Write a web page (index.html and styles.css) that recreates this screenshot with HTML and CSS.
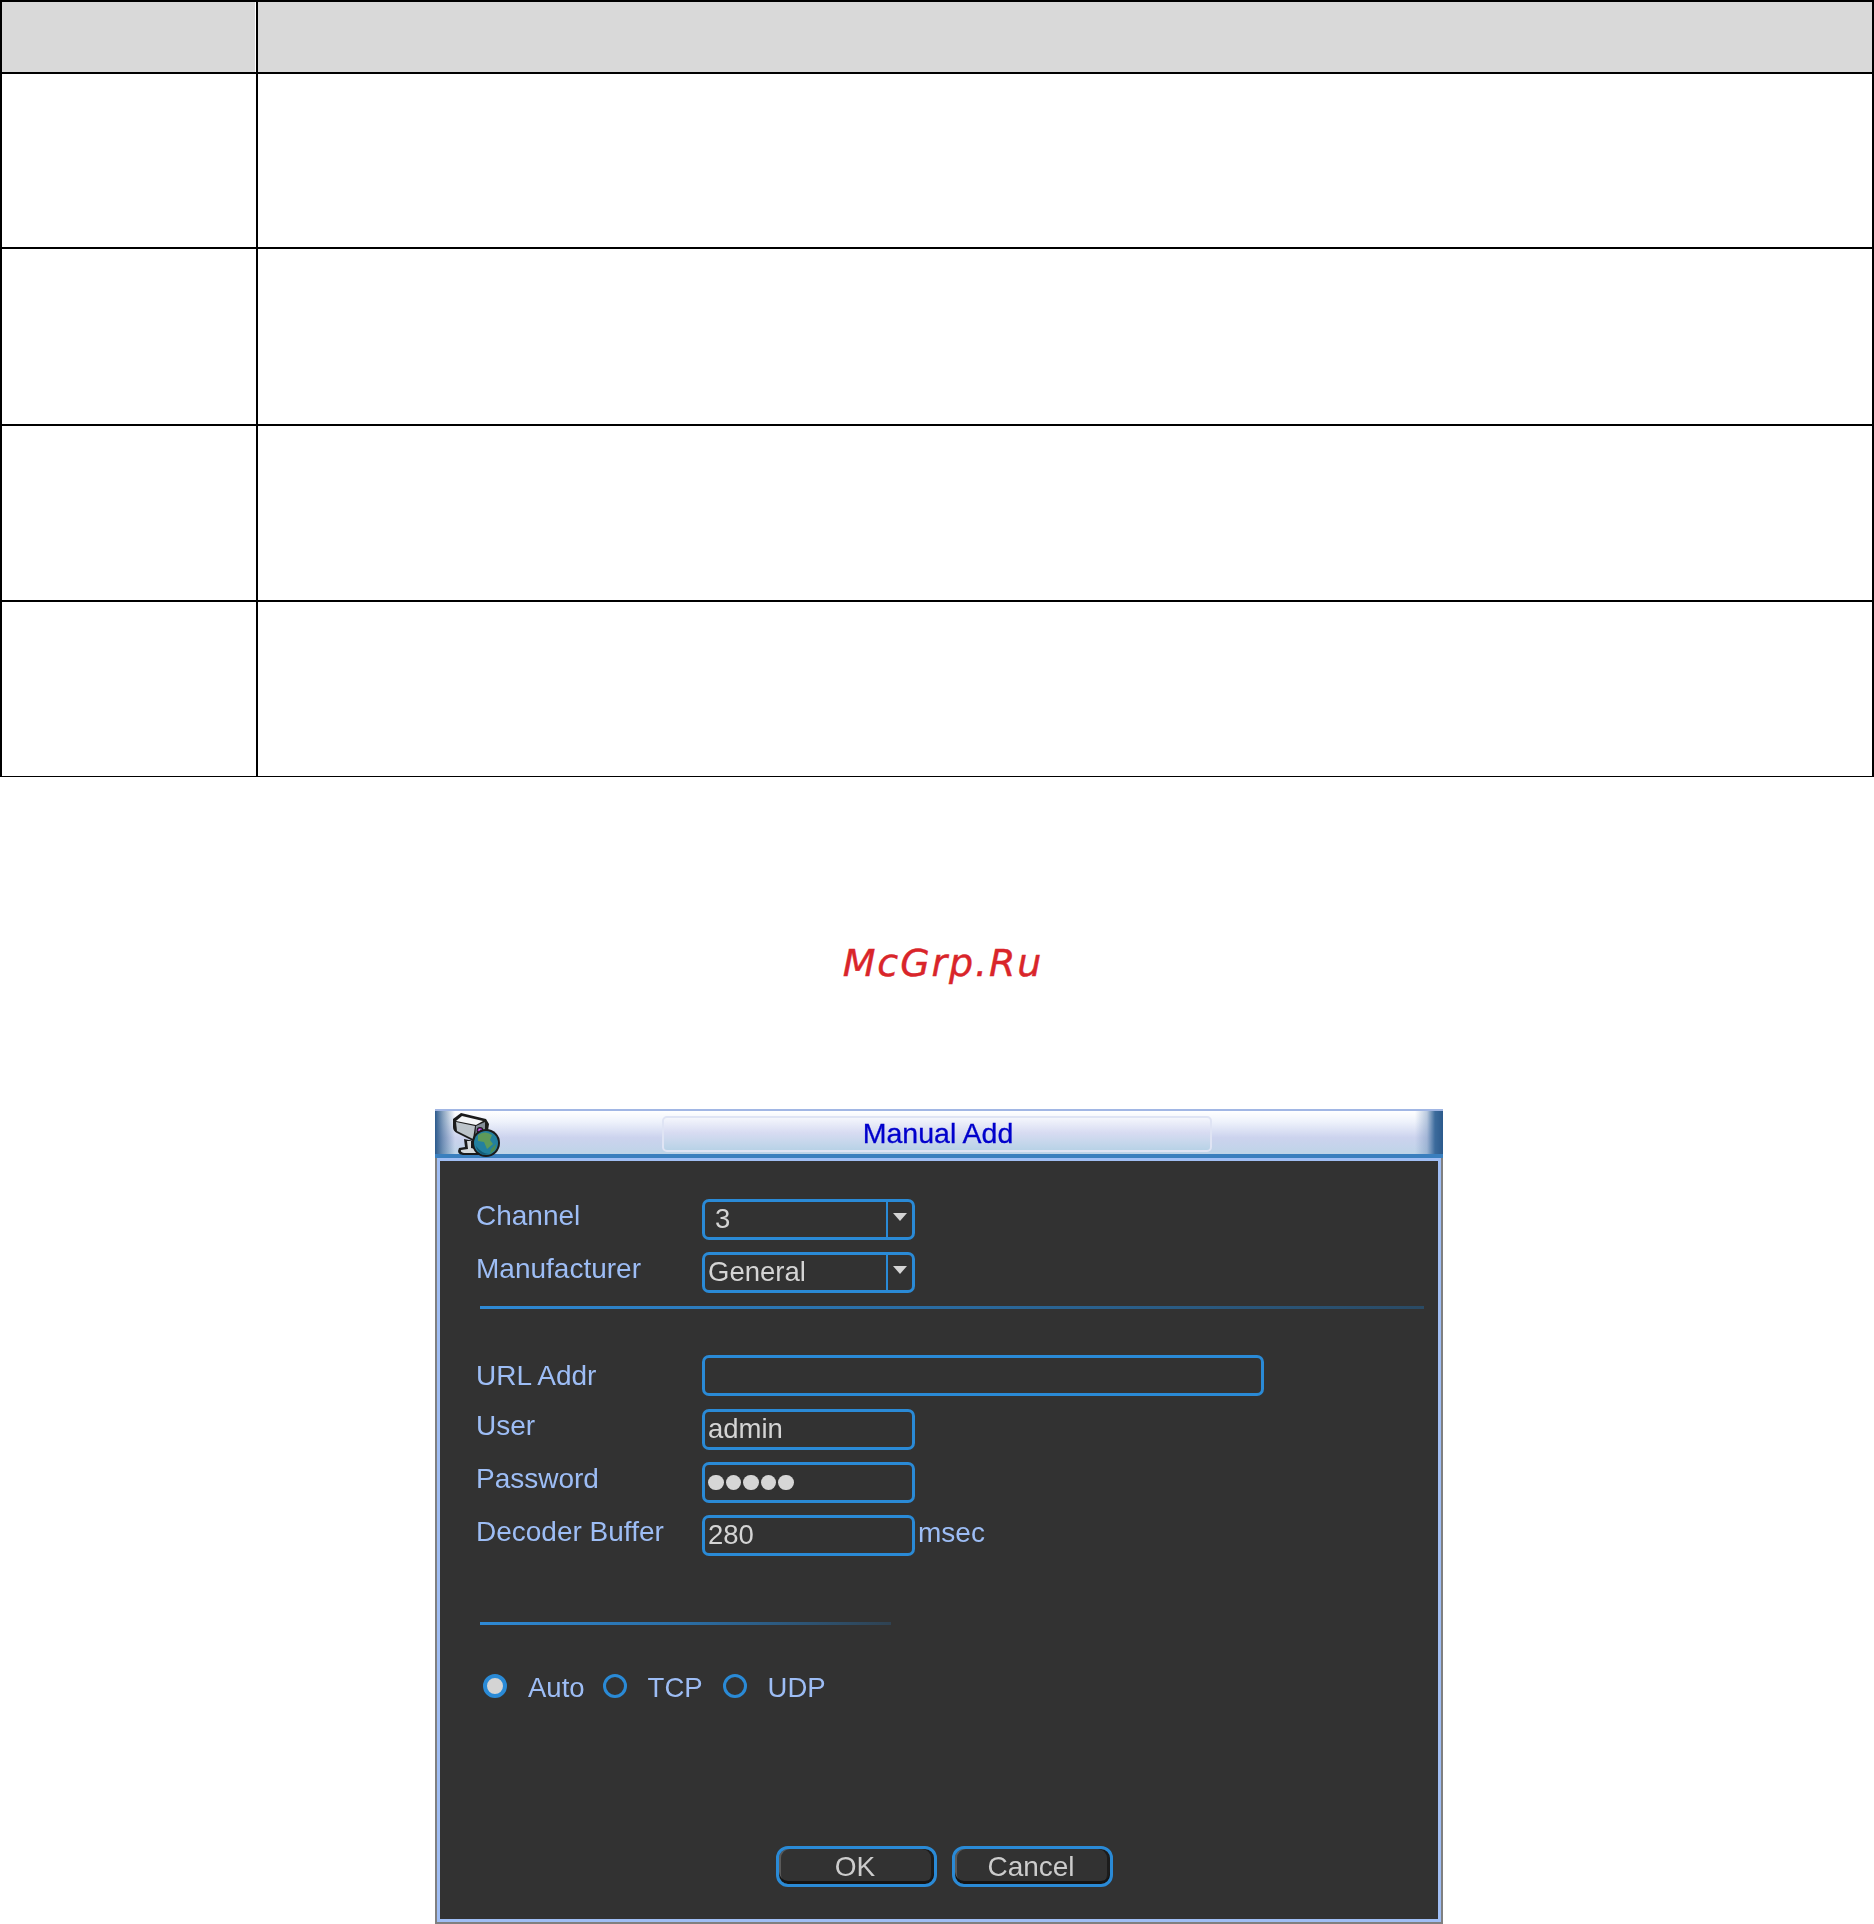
FILE: index.html
```html
<!DOCTYPE html>
<html lang="en">
<head>
<meta charset="utf-8">
<title>Manual Add</title>
<link rel="stylesheet" href="styles.css">
</head>
<body>
<table class="spec">
  <tr class="row-head"><th class="col-a"></th><th></th></tr>
  <tr class="row-1"><td></td><td></td></tr>
  <tr class="row-2"><td></td><td></td></tr>
  <tr class="row-3"><td></td><td></td></tr>
  <tr class="row-4"><td></td><td></td></tr>
</table>

<div class="watermark"><span class="watermark-text">McGrp.Ru</span></div>

<section class="dialog">
  <header class="titlebar">
    <svg class="cam-icon" width="50" height="46" viewBox="0 0 50 46" aria-hidden="true">
      <path d="M13 27 L14 35 L8 36 Q5 42 12 43 L30 43 L32 36 L23 34 L23 29 Z" fill="#1b1b1b"/>
      <path d="M16 29 L17 37 L10 38 Q9 40 13 41 L28 41 L28 38 L20 36 L20 29 Z" fill="#d6dadd"/>
      <path d="M2 7 L10 1 L35 7 L38 12 L36 25 L26 31 L6 21 Q2 19 2 15 Z" fill="#1b1b1b"/>
      <path d="M5 9 L11 4 L32 9 L25 13 Z" fill="#f4f6f8"/>
      <path d="M5 10 L24 14 L22 27 L6 19 Z" fill="#bcc4ca"/>
      <path d="M25 14 L34 10 L34 23 L24 28 Z" fill="#838d98"/>
      <circle cx="29" cy="18.500" r="3.400" fill="#1b1b1b"/>
      <circle cx="29" cy="18.500" r="2.300" fill="#a422c8"/>
      <circle cx="28.500" cy="18" r="0.800" fill="#f0c0ff"/>
      <circle cx="35" cy="31" r="14" fill="#1b1b1b"/>
      <circle cx="35" cy="31" r="12" fill="#23809f"/>
      <path d="M27 23 Q34 18 41 23 L39 28 L42 32 L36 37 L33 30 L27 29 Z" fill="#5d9a59"/>
      <path d="M40 37 L45 32 L44 38 L39 42 Z" fill="#4d8b52"/>
      <path d="M25 34 Q30 41 38 42 L32 43 Q26 40 25 34 Z" fill="#145c78"/>
    </svg>
    <div class="title-pill"><span class="title-text">Manual Add</span></div>
  </header>

  <div class="panel">
    <div class="form-row row-first">
      <span class="label">Channel</span>
      <div class="box box-select"><span class="value value-inset">3</span><span class="drop"></span></div>
    </div>
    <div class="form-row">
      <span class="label">Manufacturer</span>
      <div class="box box-select"><span class="value">General</span><span class="drop"></span></div>
    </div>
    <div class="rule rule-long"></div>
    <div class="form-row row-url">
      <span class="label label-url">URL Addr</span>
      <div class="box box-wide"></div>
    </div>
    <div class="form-row">
      <span class="label">User</span>
      <div class="box"><span class="value">admin</span></div>
    </div>
    <div class="form-row">
      <span class="label">Password</span>
      <div class="box"><span class="dots"><i></i><i></i><i></i><i></i><i></i></span></div>
    </div>
    <div class="form-row">
      <span class="label">Decoder Buffer</span>
      <div class="box"><span class="value">280</span></div>
      <span class="label unit">msec</span>
    </div>
    <div class="rule rule-short"></div>
    <div class="radios">
      <span class="radio radio-on"></span><span class="radio-label label-auto">Auto</span>
      <span class="radio"></span><span class="radio-label label-tcp">TCP</span>
      <span class="radio"></span><span class="radio-label">UDP</span>
    </div>
    <div class="actions">
      <div class="btn">OK</div>
      <div class="btn">Cancel</div>
    </div>
  </div>
</section>
</body>
</html>
```

FILE: styles.css
```css
html, body { margin: 0; padding: 0; background: #fff; }
body { width: 1874px; height: 1924px; overflow: hidden; font-family: "Liberation Sans", Arial, sans-serif; }

.spec {
  display: table;
  width: 1874px;
  table-layout: fixed;
  border-collapse: separate;
  border-spacing: 0;
  border-top: 2px solid #000;
  border-left: 2px solid #000;
  box-sizing: border-box;
}
.spec th, .spec td {
  padding: 0;
  border-right: 2px solid #000;
  border-bottom: 2px solid #000;
  background: #fff;
}
.spec th { background: #d9d9d9; box-sizing: border-box; }
.spec .col-a { width: 256px; box-shadow: inset -1px 0 0 #fff; }
.row-head { height: 72px; }
.row-1 { height: 175px; }
.row-2 { height: 177px; }
.row-3 { height: 176px; }
.row-4 { height: 175px; }
.row-4 td { border-bottom-width: 1px; }

.watermark {
  height: 332px;
  display: flex;
  align-items: center;
  justify-content: center;
  padding: 40px 0 0 12px;
  box-sizing: border-box;
}
.watermark-text {
  font-family: "DejaVu Sans", sans-serif;
  font-style: oblique;
  font-size: 38px;
  letter-spacing: 1.9px;
  line-height: 44px;
  color: #d9252a;
  -webkit-text-stroke: 0.4px #d9252a;
}

.dialog {
  width: 1008px;
  height: 815px;
  margin-left: 435px;
  display: flex;
  flex-direction: column;
  filter: blur(0.5px);
}
.titlebar {
  height: 49px;
  flex: none;
  box-sizing: border-box;
  display: flex;
  align-items: flex-start;
  border-top: 2px solid #a1b6e4;
  border-bottom: 4px solid #3a7fbe;
  background:
    linear-gradient(90deg, #2c5a8c 0, rgba(44,90,140,0.55) 8px, rgba(255,255,255,0) 20px),
    linear-gradient(270deg, #2c5a8c 0, #3c6b9c 8px, rgba(120,150,190,0.5) 16px, rgba(255,255,255,0) 28px),
    linear-gradient(180deg, #ffffff 0, #eef2fb 25%, #ccd3ee 62%, #bed4e7 100%);
}
.cam-icon { flex: none; margin: 1px 0 0 16px; }
.title-pill {
  box-sizing: border-box;
  width: 550px;
  height: 36px;
  margin: 5px 0 0 161px;
  border: 2px solid #dfe4f4;
  border-radius: 5px;
  display: flex;
  align-items: center;
  justify-content: center;
  padding: 0 0 3px 2px;
  background: linear-gradient(180deg, #f4f6fc 0, #d8dcf2 45%, #b8d2e6 100%);
}
.title-text { font-size: 28.5px; line-height: 30px; color: #0000cc; -webkit-text-stroke: 0.3px #0000cc; }

.panel {
  flex: 1;
  box-sizing: border-box;
  background: #323232;
  border: 2px solid #808080;
  border-top: 0;
  box-shadow: inset 0 0 0 3px #a0bef4;
  padding: 41px 0 0 40px;
  display: flex;
  flex-direction: column;
}
.form-row {
  display: flex;
  align-items: center;
  height: 41px;
  margin-top: 12px;
}
.row-first { margin-top: 0; }
.row-url { margin-top: 0; margin-bottom: 1px; }
.label {
  width: 226px;
  margin-left: -1px;
  flex: none;
  font-size: 28px;
  line-height: 32px;
  color: #9dbdf5;
  padding-bottom: 8px;
}
.label-url { padding-bottom: 0; }
.unit { width: auto; margin-left: 0; padding: 0 0 6px 3px; }
.box {
  box-sizing: border-box;
  width: 213px;
  height: 41px;
  flex: none;
  border: 3px solid #2a8ad6;
  border-radius: 7px;
  display: flex;
  align-items: center;
  padding-left: 3px;
}
.box-wide { width: 562px; }
.value { font-size: 27.5px; line-height: 34px; color: #d4d4d4; flex: 1; padding-bottom: 2px; }
.value-inset { padding-left: 7px; }
.drop {
  flex: none;
  box-sizing: border-box;
  width: 26px;
  height: 100%;
  border-left: 2px solid #2a8ad6;
  display: flex;
  align-items: center;
  justify-content: center;
  padding-bottom: 6px;
}
.drop::after {
  content: "";
  border-left: 7px solid transparent;
  border-right: 7px solid transparent;
  border-top: 8px solid #d4d4d4;
}
.dots { display: flex; gap: 2px; }
.dots i { display: block; width: 15.500px; height: 15.500px; border-radius: 50%; background: #d6d6d6; }

.rule { height: 3px; flex: none; }
.rule-long {
  width: 944px;
  margin: 13px 0 46px 3px;
  background: linear-gradient(90deg, #2e8ad6 0, #2a6ea6 45%, #2a4a64 100%);
}
.rule-short {
  width: 411px;
  margin: 66px 0 0 3px;
  background: linear-gradient(90deg, #2e8ad6 0, #2a6ea6 50%, #2f4252 100%);
}

.radios {
  display: flex;
  align-items: center;
  height: 36px;
  margin: 43px 0 0 6px;
}
.radio {
  box-sizing: border-box;
  width: 24px;
  height: 24px;
  flex: none;
  border: 3px solid #2a8ad6;
  border-radius: 50%;
  margin-right: 21px;
}
.radio-on { background: #d4d4d4; border-width: 4px; }
.radio-label { font-size: 27.5px; line-height: 34px; color: #9dbdf5; padding-top: 3px; }
.label-auto { margin-right: 18px; }
.label-tcp { margin-right: 20px; }

.actions {
  display: flex;
  gap: 15px;
  margin: 142px 0 0 299px;
}
.btn {
  box-sizing: border-box;
  width: 161px;
  height: 41px;
  border: 3px solid #2a8ad6;
  border-radius: 12px;
  box-shadow: inset 0 -3px 0 #141414, inset 2px 0 0 #5a5a5a, inset -3px 0 0 #1c1c1c;
  display: flex;
  align-items: center;
  justify-content: center;
  padding-right: 3px;
  font-size: 28px;
  line-height: 32px;
  color: #cccccc;
}
```
